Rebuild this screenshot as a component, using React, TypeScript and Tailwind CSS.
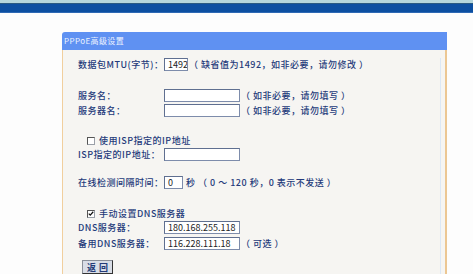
const font = { fontFamily: '"Noto Sans CJK SC", "Noto Sans", sans-serif' };

function Field({ w, value }: { w: string; value?: string }) {
  return (
    <div
      className={`${w} h-[13px] bg-white border border-[#7d8cab] border-t-[#5f6f90] border-l-[#5f6f90] flex items-center pl-[3px] text-[9px] leading-none font-normal tracking-normal text-[#222] overflow-hidden whitespace-nowrap`}
    >
      {value}
    </div>
  );
}

function Box({ checked }: { checked?: boolean }) {
  return (
    <div className="w-[8px] h-[8px] bg-white border border-[#9aa0a8] border-t-[#555] border-l-[#555] relative">
      {checked && (
        <svg viewBox="0 0 8 8" className="absolute left-0 top-0 w-[6px] h-[6px]">
          <path d="M1 3.5 L3 5.5 L7 1" stroke="#111" strokeWidth="1.6" fill="none" />
        </svg>
      )}
    </div>
  );
}

function Row({ label, mt, children }: { label: string; mt: string; children: React.ReactNode }) {
  return (
    <div className={`flex items-center h-[13px] ${mt}`}>
      <div className="w-[86px] shrink-0 whitespace-nowrap">{label}</div>
      {children}
    </div>
  );
}

export default function App() {
  return (
    <div className="w-[473px] h-[274px] overflow-hidden bg-[#fdfdfd] flex flex-col" style={font}>
      <div className="h-[4px] bg-[#b5d6dc]" />
      <div className="h-[1px] bg-[#2a5a82]" />
      <div className="h-[11px] bg-[#0c4fa1] border-b border-[#2e69b4]" />

      <div className="ml-[62px] mt-[19px] w-[385px] flex-1 flex flex-col">
        <div className="h-[18px] bg-[#5f91f2] rounded-tl-[3px] flex items-center pl-[2px] text-[8px] text-[#eef3ff] tracking-[0.4px]">
          PPPoE高级设置
        </div>
        <div className="flex-1 bg-[#f6f5f2] border-l border-[#f1cf9e] border-r-[2px] border-r-[#ecc793] pl-[15px] text-[9px] leading-none font-medium tracking-[0.5px] text-[#243a7a]">
          <div className="h-full border-r border-[#dce8f5] mr-[4px]">
            <Row label="数据包MTU(字节)：" mt="mt-[8px]">
              <Field w="w-[24px]" value="1492" />
              <span className="ml-[1px]">（ 缺省值为1492，如非必要，请勿修改 ）</span>
            </Row>
            <Row label="服务名：" mt="mt-[18px]">
              <Field w="w-[76px]" />
              <span className="ml-[1px]">（ 如非必要，请勿填写 ）</span>
            </Row>
            <Row label="服务器名：" mt="mt-[2px]">
              <Field w="w-[76px]" />
              <span className="ml-[1px]">（ 如非必要，请勿填写 ）</span>
            </Row>

            <div className="flex items-center h-[13px] mt-[17px] pl-[9px]">
              <Box />
              <span className="ml-[4px]">使用ISP指定的IP地址</span>
            </div>
            <Row label="ISP指定的IP地址：" mt="mt-[1px]">
              <Field w="w-[76px]" />
            </Row>

            <Row label="在线检测间隔时间：" mt="mt-[15px]">
              <Field w="w-[19px]" value="0" />
              <span className="ml-[3px]">秒 （ 0 ～ 120 秒，0 表示不发送 ）</span>
            </Row>

            <div className="flex items-center h-[13px] mt-[18px] pl-[9px]">
              <Box checked />
              <span className="ml-[4px]">手动设置DNS服务器</span>
            </div>
            <Row label="DNS服务器：" mt="mt-[1px]">
              <Field w="w-[76px]" value="180.168.255.118" />
            </Row>
            <Row label="备用DNS服务器：" mt="mt-[3px]">
              <Field w="w-[76px]" value="116.228.111.18" />
              <span className="ml-[1px]">（ 可选 ）</span>
            </Row>

            <div className="mt-[10px] ml-[4px] w-[31px] h-[14px] bg-[#d9dde6] border border-[#8a8f99] border-r-[#333] border-b-[#333] flex items-center justify-center text-[9px] font-bold text-[#233a78] tracking-[3px] pl-[3px]">
              返回
            </div>
          </div>
        </div>
      </div>
    </div>
  );
}
